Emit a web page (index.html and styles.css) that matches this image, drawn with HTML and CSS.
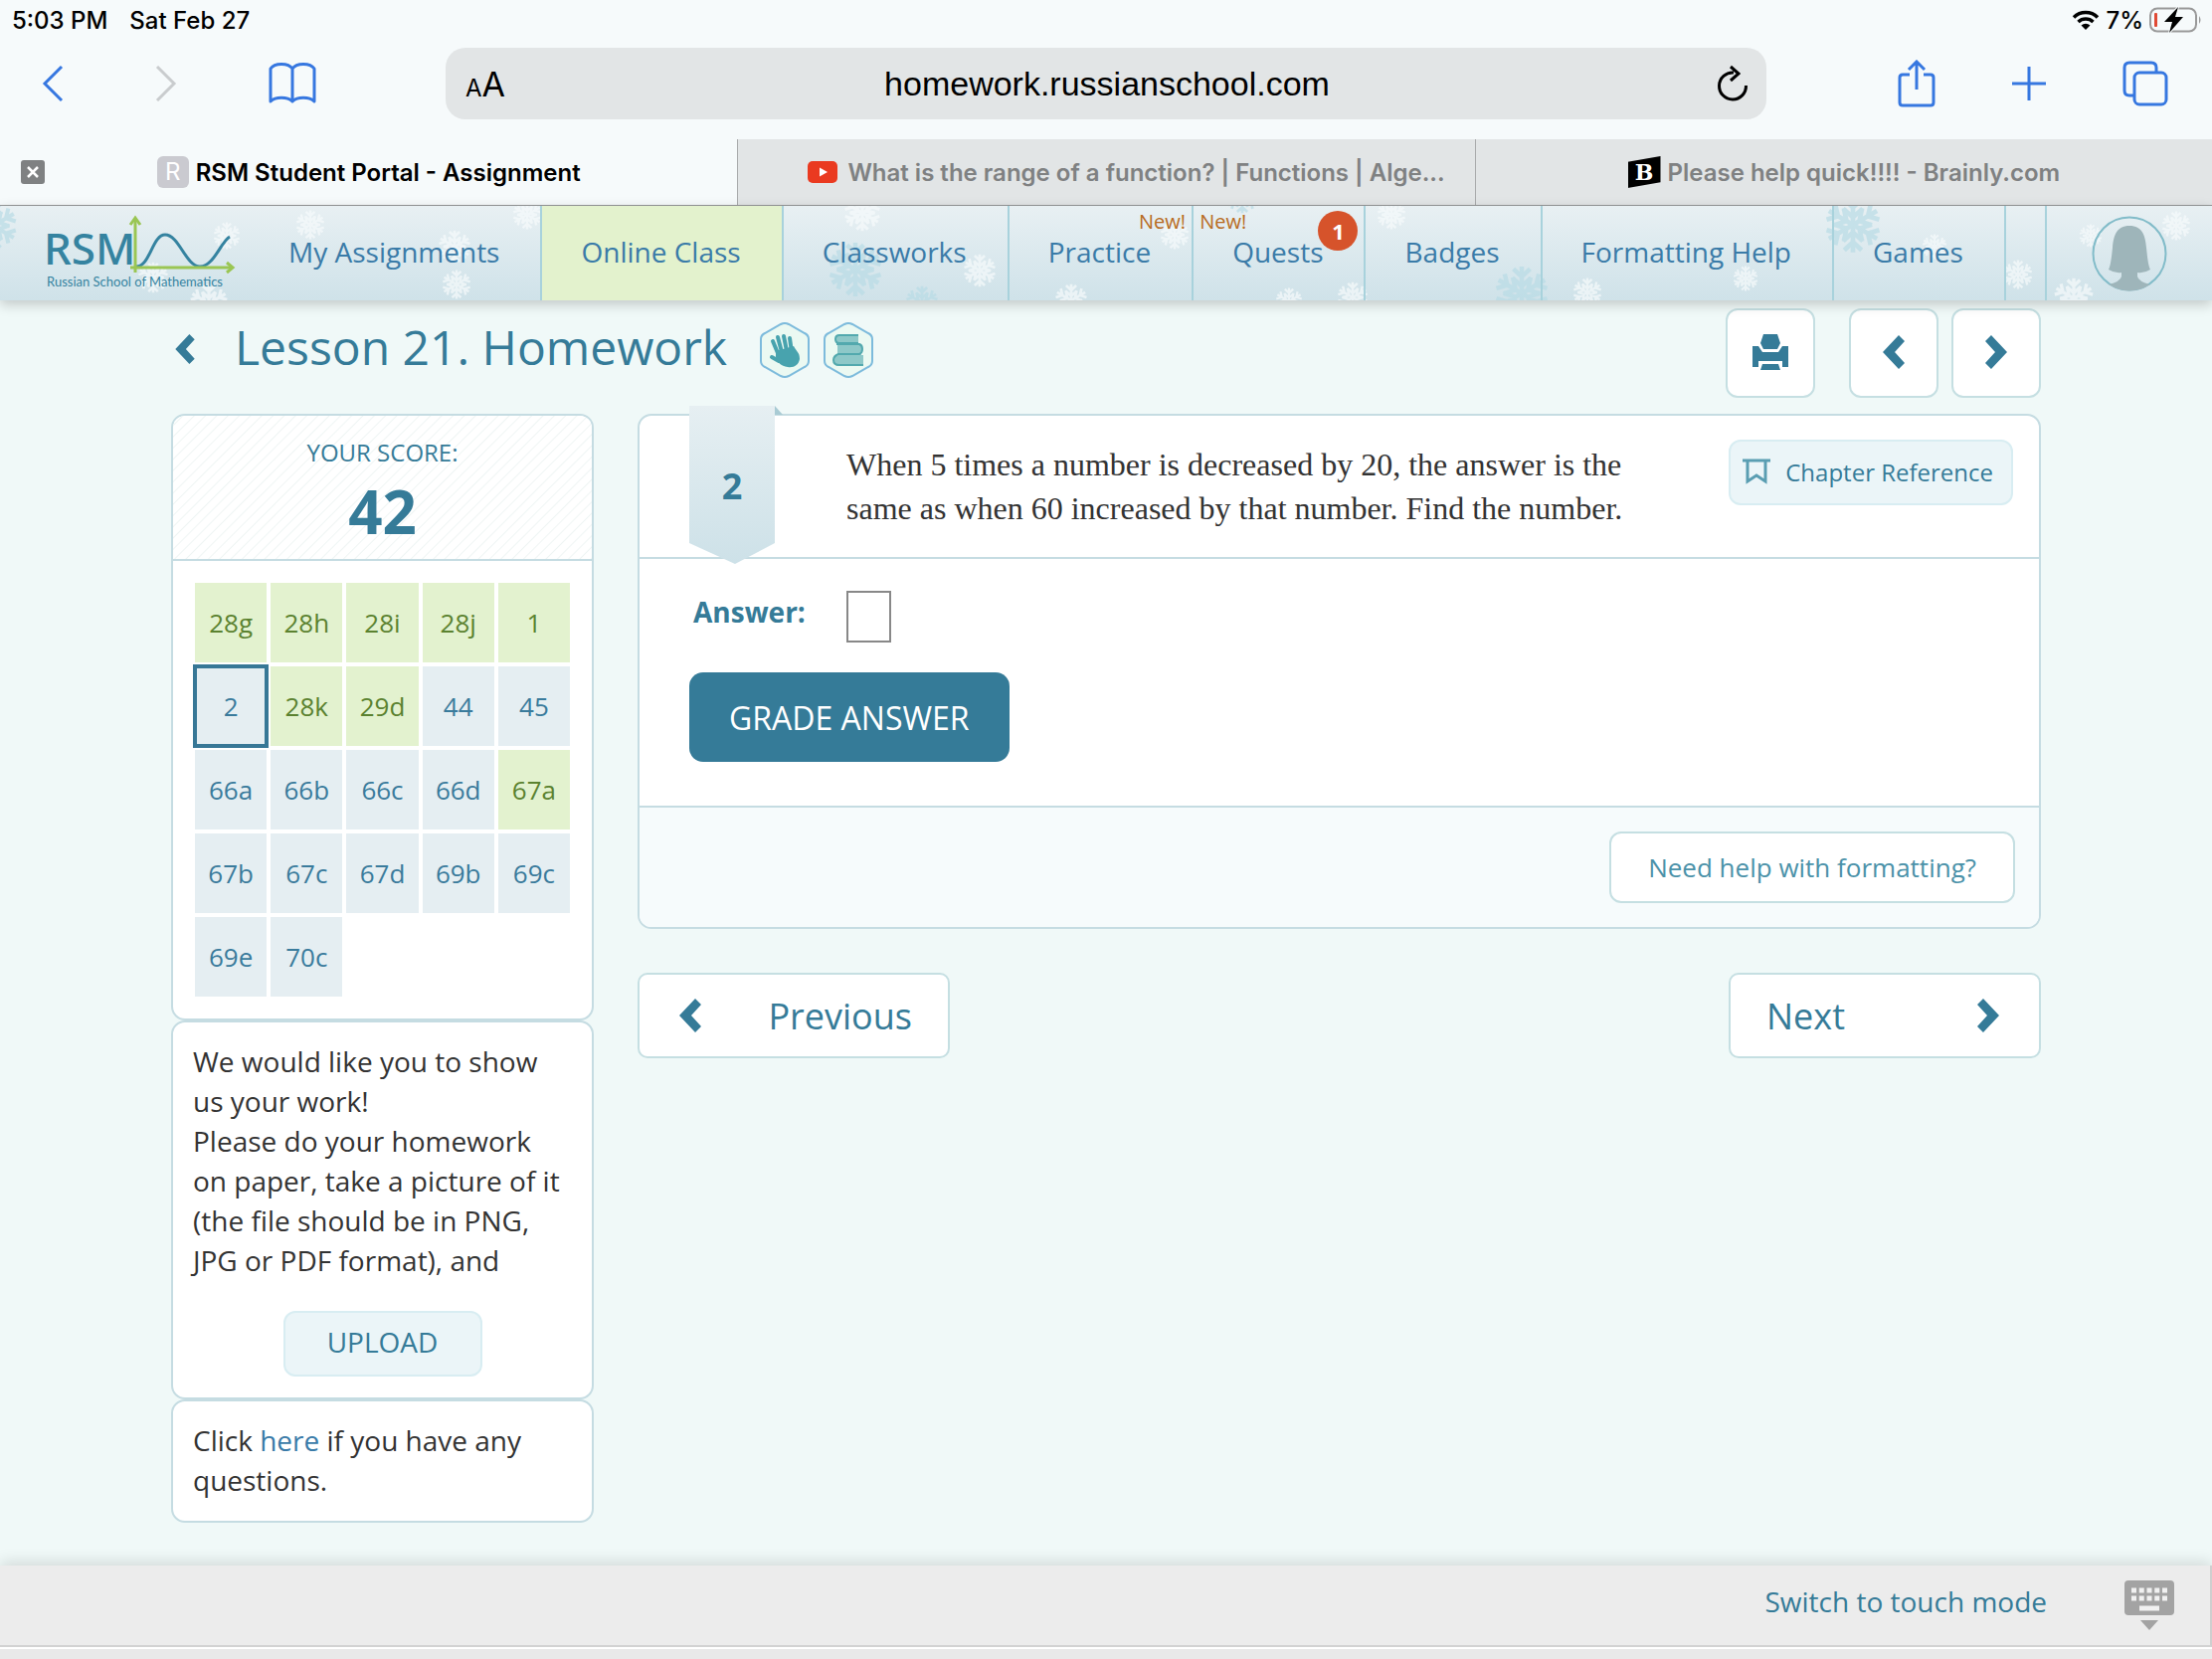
FILE: index.html
```
<!DOCTYPE html>
<html lang="en">

<head>
    <meta charset="UTF-8">
    <meta name="viewport" content="width=device-width, initial-scale=1.0">
    <title>RSM Student Portal - Assignment</title>
    <link rel="stylesheet" href="styles.css">
</head>

<body>
    <!-- shapes used more than once -->
    <svg class="defs" width="0" height="0">
        <symbol id="flake" viewBox="-50 -50 100 100">
            <g fill="none" stroke="currentColor" stroke-width="8">
                <path id="arm" d="M0 0V-48M-15 -44L0 -30L15 -44M-17 -28L0 -13L17 -28" />
                <use href="#arm" transform="rotate(60)" />
                <use href="#arm" transform="rotate(120)" />
                <use href="#arm" transform="rotate(180)" />
                <use href="#arm" transform="rotate(240)" />
                <use href="#arm" transform="rotate(300)" />
            </g>
        </symbol>
        <symbol id="left" viewBox="0 0 22 34">
            <path d="M16 0L22 6L12 17L22 28L16 34L0 17Z" fill="currentColor" />
        </symbol>
        <symbol id="right" viewBox="0 0 22 34">
            <path d="M6 0L0 6L10 17L0 28L6 34L22 17Z" fill="currentColor" />
        </symbol>
    </svg>

    <div class="browser">
        <div class="status">
            <span>5:03 PM</span>
            <span>Sat Feb 27</span>
            <span class="status-right">
                <svg width="28" height="20" viewBox="0 0 28 20">
                    <path d="M2 7.500A17 17 0 0 1 26 7.500M6.500 12A11 11 0 0 1 21.500 12" fill="none" stroke="#000" stroke-width="3.500" />
                    <path d="M14 20L9.500 15.500A6.500 6.500 0 0 1 18.500 15.500Z" />
                </svg>
                <span>7%</span>
                <svg width="53" height="26" viewBox="0 0 53 26">
                    <rect x="1" y="1.500" width="46" height="23" rx="7" fill="none" stroke="#999" stroke-width="2" />
                    <path d="M50 9Q53 13 50 17Z" fill="#999" />
                    <rect x="5" y="6" width="3" height="14" rx="1" fill="#e04a35" />
                    <path d="M29 0L15 15H23L20 26L34 10H26Z" stroke="#f6fafb" stroke-width="2" paint-order="stroke" />
                </svg>
            </span>
        </div>

        <div class="toolbar">
            <div class="tools">
                <button class="tool" aria-label="Back">
                    <svg width="22" height="38" viewBox="0 0 22 38"><path d="M20 2L3 19L20 36" fill="none" stroke="currentColor" stroke-width="3" /></svg>
                </button>
                <button class="tool off" aria-label="Forward">
                    <svg width="22" height="38" viewBox="0 0 22 38"><path d="M2 2L19 19L2 36" fill="none" stroke="currentColor" stroke-width="3" /></svg>
                </button>
                <button class="tool" aria-label="Bookmarks">
                    <svg width="48" height="42" viewBox="0 0 48 42"><path d="M24 6C20 0 6 0 2 6V39C7 34 19 34 24 39C29 34 41 34 46 39V6C42 0 28 0 24 6V39" fill="none" stroke="currentColor" stroke-width="3" stroke-linejoin="round" /></svg>
                </button>
            </div>
            <div class="address">
                <span class="aa"><small>A</small>A</span>
                <span class="url">homework.russianschool.com</span>
                <button class="tool reload" aria-label="Reload">
                    <svg width="32" height="38" viewBox="0 0 32 38"><path d="M17 8A13.500 13.500 0 1 0 29.500 21M14 2L22 9L14 16" fill="none" stroke="currentColor" stroke-width="3" /></svg>
                </button>
            </div>
            <div class="tools tools-right">
                <button class="tool" aria-label="Share">
                    <svg width="38" height="48" viewBox="0 0 38 48"><path d="M12 15H5Q2 15 2 18V43Q2 46 5 46H33Q36 46 36 43V18Q36 15 33 15H26M19 30V2M11 10L19 2L27 10" fill="none" stroke="currentColor" stroke-width="3" /></svg>
                </button>
                <button class="tool" aria-label="New tab">
                    <svg width="36" height="36" viewBox="0 0 36 36"><path d="M18 1V35M1 18H35" fill="none" stroke="currentColor" stroke-width="3" /></svg>
                </button>
                <button class="tool" aria-label="Show tabs">
                    <svg width="46" height="46" viewBox="0 0 46 46"><path d="M12 35H7Q2 35 2 30V7Q2 2 7 2H29Q34 2 34 7V12" fill="none" stroke="currentColor" stroke-width="3" /><rect x="12" y="12" width="32" height="32" rx="5" fill="none" stroke="currentColor" stroke-width="3" /></svg>
                </button>
            </div>
        </div>

        <div class="tabs">
            <div class="tab active">
                <button class="close" aria-label="Close tab">
                    <svg width="24" height="24" viewBox="0 0 24 24"><rect width="24" height="24" rx="3" fill="#7f8182" /><path d="M7 7L17 17M17 7L7 17" stroke="#fff" stroke-width="2.500" /></svg>
                </button>
                <span class="letter">R</span>
                <span>RSM Student Portal - Assignment</span>
            </div>
            <div class="tab long">
                <svg width="30" height="22" viewBox="0 0 30 22"><rect width="30" height="22" rx="5" fill="#ea3a20" /><path d="M12 6.500L20 11L12 15.500Z" fill="#fff" /></svg>
                <span>What is the range of a function? | Functions | Alge...</span>
            </div>
            <div class="tab">
                <span class="brainly">B</span>
                <span>Please help quick!!!! - Brainly.com</span>
            </div>
        </div>
    </div>

    <nav class="site-nav">
        <svg class="snow" width="2224" height="95">
            <g color="#b9dce6">
                <use href="#flake" x="-32" y="-5" width="50" height="50" />
                <use href="#flake" x="832" y="36" width="56" height="56" />
                <use href="#flake" x="910" y="80" width="34" height="34" />
                <use href="#flake" x="1232" y="-26" width="34" height="34" />
                <use href="#flake" x="1502" y="60" width="56" height="56" />
                <use href="#flake" x="1834" y="-10" width="58" height="58" />
            </g>
            <g color="#f7fbfc">
                <use href="#flake" x="214" y="16" width="28" height="28" />
                <use href="#flake" x="297" y="4" width="30" height="30" />
                <use href="#flake" x="440" y="24" width="34" height="34" />
                <use href="#flake" x="515" y="-6" width="30" height="30" />
                <use href="#flake" x="444" y="64" width="30" height="30" />
                <use href="#flake" x="190" y="78" width="40" height="40" />
                <use href="#flake" x="138" y="56" width="32" height="32" />
                <use href="#flake" x="848" y="-12" width="38" height="38" />
                <use href="#flake" x="968" y="48" width="34" height="34" />
                <use href="#flake" x="1060" y="78" width="34" height="34" />
                <use href="#flake" x="1166" y="14" width="30" height="30" />
                <use href="#flake" x="1282" y="82" width="28" height="28" />
                <use href="#flake" x="1344" y="76" width="32" height="32" />
                <use href="#flake" x="1384" y="-6" width="30" height="30" />
                <use href="#flake" x="1581" y="72" width="30" height="30" />
                <use href="#flake" x="1742" y="60" width="26" height="26" />
                <use href="#flake" x="1932" y="28" width="26" height="26" />
                <use href="#flake" x="2014" y="54" width="30" height="30" />
                <use href="#flake" x="2064" y="72" width="42" height="42" />
                <use href="#flake" x="2090" y="18" width="24" height="24" />
                <use href="#flake" x="2173" y="5" width="30" height="30" />
            </g>
        </svg>
        <a class="logo" href="#">
            <svg width="194" height="78" viewBox="0 0 194 78">
                <text class="logo-name" x="0" y="51">RSM</text>
                <path d="M93 53C107 53 109 21 122 21C136 21 143 53 157 53C171 53 178 28 187 23" fill="none" stroke="#3583a0" stroke-width="3" />
                <path d="M92 59V5M87 54H190" fill="none" stroke="#9ac653" stroke-width="3" />
                <path d="M87 11L92 4L97 11M184 49L190 54L184 59" fill="none" stroke="#9ac653" stroke-width="3" />
                <text class="logo-sub" x="3" y="73">Russian School of Mathematics</text>
            </svg>
        </a>
        <a class="nav-item" href="#">My Assignments</a>
        <a class="nav-item current" href="#">Online Class</a>
        <a class="nav-item" href="#">Classworks</a>
        <a class="nav-item" href="#">Practice<span class="new new-right">New!</span></a>
        <a class="nav-item" href="#">Quests<span class="new new-left">New!</span><span class="count">1</span></a>
        <a class="nav-item" href="#">Badges</a>
        <a class="nav-item" href="#">Formatting Help</a>
        <a class="nav-item" href="#">Games</a>
        <span class="nav-empty"></span>
        <a class="avatar" href="#" aria-label="Profile">
            <svg width="76" height="76" viewBox="0 0 76 76">
                <circle cx="38" cy="38" r="36.500" fill="none" stroke="#82bcc9" stroke-width="2" />
                <path d="M38 10C25 10 22 20 21 32C20 42 19 50 17 54Q23 58 30 57V61Q29 66 17 69Q38 82 59 69Q47 66 46 61V57Q53 58 59 54C57 50 56 42 55 32C54 20 51 10 38 10Z" fill="#9eb5ba" />
            </svg>
        </a>
    </nav>

    <main class="page">
        <header class="title-row">
            <a class="back" href="#" aria-label="Back to lessons"><svg width="20" height="30"><use href="#left" width="20" height="30" /></svg></a>
            <h1>Lesson 21. Homework</h1>
            <svg class="hex" width="50" height="56" viewBox="0 0 50 56">
                <path d="M21 2Q25 0 29 2L45 11Q49 13 49 17V39Q49 43 45 45L29 54Q25 56 21 54L5 45Q1 43 1 39V17Q1 13 5 11Z" fill="#ebf9f2" stroke="#7dbbdc" stroke-width="2" />
                <g fill="none" stroke="#48a3ae" stroke-width="4" stroke-linecap="round">
                    <path d="M18 31L13 19M22 30L18 15M27 29L24 14M32 30L30 16M19 39L12 35" />
                </g>
                <path d="M16 29L34 24C37 30 40 30 40 37C39 43 34 46 28 45C21 44 17 40 16 35Z" fill="#48a3ae" />
            </svg>
            <svg class="hex" width="50" height="56" viewBox="0 0 50 56">
                <path d="M21 2Q25 0 29 2L45 11Q49 13 49 17V39Q49 43 45 45L29 54Q25 56 21 54L5 45Q1 43 1 39V17Q1 13 5 11Z" fill="#ebf9f2" stroke="#7dbbdc" stroke-width="2" />
                <path d="M35 13H16Q12 13 12 17Q12 21 16 21H35ZM14 22H36Q39 23 39 27Q39 31 36 32H14ZM16 33H40V44H16Q10 44 10 38Q10 33 16 33ZM15 32H38V34H15Z" fill="#8dc8c8" />
                <path d="M35 13H16Q12 13 12 17Q12 21 16 21H35M13 22H36Q39 23 39 27Q39 31 36 32H15Q10 34 10 38Q10 43 16 43H40" fill="none" stroke="#52a9ae" stroke-width="2" />
            </svg>
            <div class="title-buttons">
                <button class="square print" aria-label="Print">
                    <svg width="36" height="36" viewBox="0 0 36 36" fill="currentColor"><path d="M11 0H25L28 9L25 15H11L8 9ZM0 12H6L10 18H26L30 12H36V33H30V27H6V33H0ZM10 30H26L28 36H8Z" /></svg>
                </button>
                <button class="square" aria-label="Previous problem"><svg width="22" height="34"><use href="#left" width="22" height="34" /></svg></button>
                <button class="square" aria-label="Next problem"><svg width="22" height="34"><use href="#right" width="22" height="34" /></svg></button>
            </div>
        </header>

        <div class="columns">
            <aside class="sidebar">
                <section class="card">
                    <div class="score">
                        <span>YOUR SCORE:</span>
                        <strong>42</strong>
                    </div>
                    <div class="problems">
                        <a class="done" href="#">28g</a>
                        <a class="done" href="#">28h</a>
                        <a class="done" href="#">28i</a>
                        <a class="done" href="#">28j</a>
                        <a class="done" href="#">1</a>
                        <a class="selected" href="#">2</a>
                        <a class="done" href="#">28k</a>
                        <a class="done" href="#">29d</a>
                        <a href="#">44</a>
                        <a href="#">45</a>
                        <a href="#">66a</a>
                        <a href="#">66b</a>
                        <a href="#">66c</a>
                        <a href="#">66d</a>
                        <a class="done" href="#">67a</a>
                        <a href="#">67b</a>
                        <a href="#">67c</a>
                        <a href="#">67d</a>
                        <a href="#">69b</a>
                        <a href="#">69c</a>
                        <a href="#">69e</a>
                        <a href="#">70c</a>
                    </div>
                </section>
                <section class="card note">
                    <p>We would like you to show us your work!<br>Please do your homework on paper, take a picture of it (the file should be in PNG, JPG or PDF format), and</p>
                    <button class="soft upload">UPLOAD</button>
                </section>
                <section class="card note">
                    <p>Click <a href="#">here</a> if you have any questions.</p>
                </section>
            </aside>

            <div class="content">
                <section class="card problem">
                    <div class="ribbon">
                        <svg width="94" height="160" viewBox="0 0 94 160">
                            <defs>
                                <linearGradient id="ribbonFill" x2="0" y2="1">
                                    <stop offset="0" stop-color="#e6eff2" />
                                    <stop offset="1" stop-color="#cde1e8" />
                                </linearGradient>
                            </defs>
                            <path d="M86 0L94 9H86Z" fill="#a9cbd4" />
                            <path d="M0 0H86V138L46 159L0 138Z" fill="url(#ribbonFill)" />
                        </svg>
                        <span>2</span>
                    </div>
                    <div class="question">
                        <p>When 5 times a number is decreased by 20, the answer is the same as when 60 increased by that number. Find the number.</p>
                        <button class="soft reference">
                            <svg width="28" height="26" viewBox="0 0 28 26"><path d="M0 2H28M5 2V23L14 17L23 23V2" fill="none" stroke="#5a9eb2" stroke-width="3" /></svg>
                            Chapter Reference
                        </button>
                    </div>
                    <form class="answer">
                        <div class="answer-row">
                            <label for="answer">Answer:</label>
                            <input type="text" id="answer">
                        </div>
                        <button type="button" class="grade">GRADE ANSWER</button>
                    </form>
                    <div class="help">
                        <button class="help-button">Need help with formatting?</button>
                    </div>
                </section>
                <div class="pager">
                    <button class="page-button"><svg width="22" height="34"><use href="#left" width="22" height="34" /></svg><span>Previous</span></button>
                    <button class="page-button next"><span>Next</span><svg width="22" height="34"><use href="#right" width="22" height="34" /></svg></button>
                </div>
            </div>
        </div>
    </main>

    <footer class="footer">
        <div class="footer-bar">
            <a href="#">Switch to touch mode</a>
            <button class="keyboard" aria-label="Hide keyboard">
                <svg width="50" height="50" viewBox="0 0 50 50">
                    <rect width="50" height="35" rx="4" fill="#a3a3a3" />
                    <path d="M7 10H43M7 18H43" stroke="#f1f1f1" stroke-width="5" stroke-dasharray="5 2.750" />
                    <path d="M15 28H35" stroke="#f1f1f1" stroke-width="5" />
                    <path d="M16 40H34L25 50Z" fill="#a3a3a3" />
                </svg>
            </button>
        </div>
    </footer>
</body>

</html>
```
FILE: styles.css
```
* {
    box-sizing: border-box;
}

body {
    margin: 0;
    min-height: 100vh;
    display: flex;
    flex-direction: column;
    background-color: #f0f9f8;
    color: #333;
    font-family: "Open Sans", sans-serif;
    font-size: 28px;
}

a {
    color: #3a7ba8;
    text-decoration: none;
}

button {
    font-family: inherit;
    font-size: 28px;
    padding: 0;
    cursor: pointer;
}

svg {
    display: block;
    flex: none;
}

.defs {
    position: absolute;
}

/* Browser bars */
.browser {
    background-color: #f6fafb;
    color: #000;
    font-family: Inter, sans-serif;
}

.status {
    display: flex;
    align-items: center;
    gap: 22px;
    height: 40px;
    padding: 0 10px 0 12px;
    font-size: 24px;
    font-weight: 500;
}

.status-right {
    display: flex;
    align-items: center;
    gap: 6px;
    margin-left: auto;
}

.toolbar {
    display: flex;
    align-items: center;
    height: 100px;
    padding-bottom: 12px;
}

.tools {
    display: flex;
    align-items: center;
    gap: 92px;
    width: 448px;
    padding-left: 42px;
}

.tools-right {
    justify-content: flex-end;
    gap: 76px;
    padding: 0 44px 0 0;
}

.tool {
    border: 0;
    background: none;
    color: #3677e0;
}

.off {
    color: #c9ccce;
}

.address {
    flex: 1;
    display: flex;
    align-items: center;
    justify-content: space-between;
    height: 72px;
    padding: 0 18px 0 20px;
    border-radius: 20px;
    background-color: #e2e5e6;
    font-size: 34px;
}

.aa {
    width: 32px;
    white-space: nowrap;
}

.aa small {
    font-size: 24px;
}

.url {
    font-family: "Liberation Sans", sans-serif;
}

.reload {
    color: #000;
}

.tabs {
    display: grid;
    grid-template-columns: repeat(3, 1fr);
    height: 67px;
    border-bottom: 1px solid #97999a;
}

.tab {
    position: relative;
    display: flex;
    align-items: center;
    justify-content: center;
    gap: 7px;
    min-width: 0;
    background-color: #e2e5e6;
    border-left: 1px solid #a9abac;
    color: #7f8182;
    font-size: 24px;
    font-weight: 600;
    white-space: nowrap;
}

.tab.long {
    justify-content: flex-end;
    gap: 10px;
    padding-right: 30px;
}

.tab.active {
    background-color: #f6fafb;
    border-left: 0;
    color: #000;
}

.close {
    position: absolute;
    left: 21px;
    border: 0;
    background: none;
}

.letter {
    width: 32px;
    line-height: 32px;
    border-radius: 6px;
    background-color: #cacad0;
    color: #fff;
    font-weight: 400;
    text-align: center;
}

.brainly {
    width: 33px;
    line-height: 32px;
    background-color: #000;
    clip-path: polygon(0 18%, 100% 0, 100% 82%, 0 100%);
    color: #fff;
    font-family: "DejaVu Serif", serif;
    font-size: 22px;
    font-weight: 700;
    text-align: center;
}

/* Site navigation */
.site-nav {
    position: relative;
    display: flex;
    height: 95px;
    background: linear-gradient(#e8f0f3, #cfe2e9);
    box-shadow: 0 4px 12px rgba(0, 0, 0, 0.2);
}

.snow {
    position: absolute;
    top: 0;
    left: 0;
    opacity: 0.7;
}

.logo {
    position: relative;
    width: 251px;
    padding: 8px 0 0 44px;
}

.logo-name {
    fill: #3583a0;
    font-family: "Noto Sans", sans-serif;
    font-size: 44px;
    font-weight: 500;
}

.logo-sub {
    fill: #3583a0;
    font-family: Lato, sans-serif;
    font-size: 13px;
}

.nav-item {
    position: relative;
    display: flex;
    align-items: center;
    padding: 0 41px 3px 39px;
    border-right: 2px solid #a8d2dc;
    white-space: nowrap;
}

.current {
    background-color: #e3f2cd;
}

.new {
    position: absolute;
    top: 4px;
    color: #b86b22;
    font-size: 20px;
    line-height: 24px;
}

.new-right {
    right: 6px;
}

.new-left {
    left: 6px;
}

.count {
    position: absolute;
    top: 5px;
    right: 6px;
    width: 40px;
    border-radius: 20px;
    background-color: #d6532b;
    color: #fff;
    font-size: 22px;
    font-weight: 700;
    line-height: 40px;
    text-align: center;
}

.nav-empty {
    width: 41px;
    border-right: 2px solid #a8d2dc;
}

.avatar {
    position: relative;
    flex: 1;
    display: flex;
    align-items: center;
    justify-content: center;
}

/* Page */
.page {
    width: 100%;
    max-width: 1928px;
    margin: 0 auto;
    padding: 8px 24px 42px;
}

.title-row {
    display: flex;
    align-items: center;
    gap: 14px;
    height: 90px;
    color: #357b98;
}

.back {
    padding: 0 26px 8px 4px;
    color: #357b98;
}

h1 {
    margin: 0 19px 13px 0;
    font-size: 48px;
    font-weight: 400;
    line-height: 66px;
}

.hex {
    margin-bottom: 6px;
}

.title-buttons {
    display: flex;
    gap: 13px;
    margin-left: auto;
}

.square {
    display: flex;
    align-items: center;
    justify-content: center;
    width: 90px;
    height: 90px;
    padding-bottom: 3px;
    border: 2px solid #c5dfe2;
    border-radius: 12px;
    background-color: #fff;
    color: #357b98;
}

.print {
    margin-right: 21px;
}

.columns {
    display: flex;
    align-items: flex-start;
    gap: 44px;
    padding-top: 16px;
}

.card {
    border: 2px solid #c5dce2;
    border-radius: 14px;
    background-color: #fff;
}

.sidebar {
    flex: none;
    width: 425px;
}

.score {
    display: flex;
    flex-direction: column;
    align-items: center;
    height: 146px;
    padding-top: 20px;
    border-bottom: 2px solid #c5dce2;
    border-radius: 12px 12px 0 0;
    background: repeating-linear-gradient(135deg, #fff 0, #fff 6px, #eff5f4 7px, #fff 8px);
    color: #357b98;
    font-size: 24px;
    line-height: 34px;
}

.score strong {
    font-size: 60px;
    line-height: 84px;
}

.problems {
    display: grid;
    grid-template-columns: repeat(5, 1fr);
    gap: 4px;
    padding: 22px;
}

.problems a {
    background-color: #e5eef2;
    color: #3a7b9c;
    line-height: 80px;
    text-align: center;
    font-size: 26px;
}

.problems .done {
    background-color: #e3f2cf;
    color: #5b8230;
}

.problems .selected {
    outline: 4px solid #377796;
    outline-offset: -2px;
}

.note {
    padding: 19px 20px 21px;
    line-height: 40px;
}

.note p {
    margin: 0;
}

.soft {
    height: 66px;
    border: 2px solid #d8edf2;
    border-radius: 12px;
    background-color: #ebf5f8;
    color: #357b98;
}

.upload {
    display: block;
    width: 200px;
    margin: 31px auto 0;
    padding-bottom: 4px;
}

.note .upload + * {
    margin-top: 0;
}

.content {
    flex: 1;
    min-width: 0;
}

.problem {
    position: relative;
}

.ribbon {
    position: absolute;
    top: -10px;
    left: 50px;
}

.ribbon span {
    position: absolute;
    top: 60px;
    left: 0;
    width: 86px;
    color: #357b98;
    font-size: 36px;
    font-weight: 700;
    line-height: 42px;
    text-align: center;
}

.question {
    display: flex;
    align-items: flex-start;
    justify-content: space-between;
    padding: 24px 26px 26px 208px;
    border-bottom: 2px solid #c5dce2;
}

.question p {
    max-width: 800px;
    margin: 3px 0 1px;
    font-family: "Liberation Serif", serif;
    font-size: 32px;
    line-height: 44px;
}

.reference {
    display: flex;
    align-items: center;
    gap: 15px;
    padding: 0 18px 2px 12px;
    font-size: 24px;
}

.answer {
    padding: 32px 50px 44px;
}

.answer-row {
    display: flex;
    align-items: center;
}

.answer label {
    width: 158px;
    padding: 0 0 10px 4px;
    color: #357b98;
    font-weight: 700;
}

.answer input {
    width: 45px;
    height: 52px;
    border: 2px solid #888;
    font-size: 28px;
}

.grade {
    height: 90px;
    margin-top: 30px;
    padding: 0 40px;
    border: 0;
    border-radius: 14px;
    background-color: #357b98;
    color: #fff;
    font-size: 32px;
}

.help {
    display: flex;
    justify-content: flex-end;
    padding: 24px;
    border-top: 2px solid #c5dce2;
    border-radius: 0 0 12px 12px;
    background-color: #f6fbfc;
}

.help-button {
    height: 72px;
    padding: 0 37px;
    border: 2px solid #c5dfe2;
    border-radius: 12px;
    background-color: #fff;
    color: #4b92a9;
    font-size: 26px;
}

.pager {
    display: flex;
    justify-content: space-between;
    padding-top: 44px;
}

.page-button {
    display: flex;
    align-items: center;
    justify-content: space-between;
    width: 314px;
    height: 86px;
    padding: 0 36px 0 40px;
    border: 2px solid #c5dfe2;
    border-radius: 10px;
    background-color: #fff;
    color: #357b98;
    font-size: 36px;
}

.page-button.next {
    padding: 0 40px 0 36px;
}

/* Footer */
.footer {
    margin-top: auto;
    padding-bottom: 12px;
    background-color: #e9e9e9;
    box-shadow: 0 -4px 14px rgba(0, 0, 0, 0.12);
}

.footer-bar {
    display: flex;
    align-items: center;
    justify-content: flex-end;
    gap: 78px;
    height: 82px;
    padding-right: 36px;
    border-right: 2px solid #cfcfcf;
    border-bottom: 2px solid #d2d2d2;
    background-color: #ececec;
    box-shadow: 0 2px 0 #fff;
}

.footer a {
    padding-bottom: 8px;
    color: #357b98;
}

.keyboard {
    border: 0;
    background: none;
}
```
